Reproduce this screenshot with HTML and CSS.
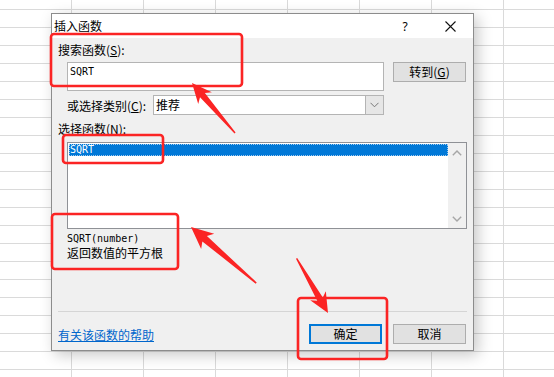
FILE: index.html
```html
<!DOCTYPE html>
<html lang="zh-CN">

<head>
    <meta charset="UTF-8">
    <meta name="viewport" content="width=device-width, initial-scale=1.0">
    <title>插入函数</title>
    <link rel="stylesheet" href="styles.css">
</head>

<body>
    <div class="sheet">
        <div class="dialog">
            <div class="titlebar">
                <span class="title">插入函数</span>
                <span class="help">?</span>
                <span class="close">
                    <svg width="11" height="11" viewBox="0 0 11 11">
                        <path d="M0.5 0.5 L10.5 10.5 M10.5 0.5 L0.5 10.5" stroke="#111" stroke-width="1.1" fill="none" />
                    </svg>
                </span>
            </div>
            <div class="content">
                <div class="label">搜索函数(<u>S</u>):</div>
                <div class="search-row">
                    <div class="search-box">SQRT</div>
                    <button class="btn">转到(<u>G</u>)</button>
                </div>
                <div class="category-row">
                    <span class="category-label">或选择类别(<u>C</u>):</span>
                    <div class="select">
                        <span class="select-value">推荐</span>
                        <span class="select-arrow">
                            <svg width="9" height="6" viewBox="0 0 9 6">
                                <path d="M0.5 0.8 L4.5 4.8 L8.5 0.8" stroke="#777" stroke-width="1" fill="none" />
                            </svg>
                        </span>
                    </div>
                </div>
                <div class="label list-label">选择函数(<u>N</u>):</div>
                <div class="listbox">
                    <div class="list-items">
                        <div class="item selected">SQRT</div>
                    </div>
                    <div class="scrollbar">
                        <svg width="10" height="6" viewBox="0 0 10 6">
                            <path d="M0.8 5.2 L5 1 L9.2 5.2" stroke="#a6a6a6" stroke-width="1.4" fill="none" />
                        </svg>
                        <svg width="10" height="6" viewBox="0 0 10 6">
                            <path d="M0.8 0.8 L5 5 L9.2 0.8" stroke="#a6a6a6" stroke-width="1.4" fill="none" />
                        </svg>
                    </div>
                </div>
                <div class="desc-sig">SQRT(number)</div>
                <div class="desc-text">返回数值的平方根</div>
                <div class="separator"></div>
                <div class="footer">
                    <a href="javascript:void(0);" class="help-link">有关该函数的帮助</a>
                    <div class="buttons">
                        <button class="btn primary">确定</button>
                        <button class="btn">取消</button>
                    </div>
                </div>
            </div>
        </div>

        <!-- red annotation marks drawn over the screenshot -->
        <svg class="marks" width="554" height="377" viewBox="0 0 554 377">
            <g fill="none" stroke="#fb2424" stroke-width="2.6">
                <rect x="51" y="34" width="191" height="52" rx="3" />
                <rect x="63" y="135" width="100" height="28" rx="3" />
                <rect x="52" y="214" width="126" height="55" rx="3" />
                <rect x="298" y="298" width="89" height="61" rx="3" />
            </g>
            <g fill="#fb2424">
                <polygon transform="translate(192 83) rotate(-130.7)" points="0,0 -20,-9 -16,-3.2 -66,-0.7 -66,0.7 -16,3.2 -20,9" />
                <polygon transform="translate(191 227) rotate(-139.3)" points="0,0 -22,-10 -18,-3.5 -86,-0.8 -86,0.8 -18,3.5 -22,10" />
                <polygon transform="translate(328 313) rotate(60.1)" points="0,0 -20,-9 -16,-3.2 -63,-0.7 -63,0.7 -16,3.2 -20,9" />
            </g>
        </svg>
    </div>
</body>

</html>
```

FILE: styles.css
```css
html,
body {
    margin: 0;
    height: 100%;
}

body {
    background-color: #fff;
    background-image:
        linear-gradient(to right, transparent 71px, #dadada 71px),
        linear-gradient(to bottom, transparent 17px, #dadada 17px);
    background-size: 72px 100%, 100% 18px;
    background-position: 0 0, 0 10px;
    font-family: "Noto Sans CJK SC", "Microsoft YaHei", sans-serif;
    font-size: 12px;
    color: #000;
}

.sheet {
    position: relative;
    width: 554px;
    height: 377px;
    overflow: hidden;
    padding-top: 13px;
    box-sizing: border-box;
}

.dialog {
    margin-left: 51px;
    width: 423px;
    height: 338px;
    box-sizing: border-box;
    border: 1px solid #8c8c8c;
    background-color: #f0f0f0;
    box-shadow: 4px 4px 14px rgba(0, 0, 0, 0.22);
}

.titlebar {
    display: flex;
    align-items: center;
    height: 24px;
    background-color: #fff;
    padding: 0 11px 0 2px;
}

.title {
    line-height: 16px;
}

.help {
    margin-left: auto;
    width: 24px;
    text-align: center;
    font-family: "Noto Sans", sans-serif;
    font-size: 12px;
}

.close {
    display: flex;
    justify-content: center;
    width: 24px;
    margin-left: 21px;
}

.content {
    padding: 0 6px 0 6px;
}

.label {
    margin-top: 4px;
    line-height: 16px;
    height: 16px;
}

.search-row {
    display: flex;
    align-items: flex-start;
    margin-top: 4px;
    padding-left: 9px;
}

.search-box {
    width: 317px;
    height: 29px;
    box-sizing: border-box;
    background-color: #fff;
    border: 1px solid #b4b4b4;
    padding: 2px 2px;
    font-family: "DejaVu Sans Mono", monospace;
    font-size: 10px;
    line-height: 14px;
}

.btn {
    width: 73px;
    height: 20px;
    box-sizing: border-box;
    padding: 0;
    background-color: #e1e1e1;
    border: 1px solid #adadad;
    font-family: "Noto Sans CJK SC", sans-serif;
    font-size: 12px;
    line-height: 16px;
    color: #000;
}

.search-row .btn {
    margin-left: 9px;
}

.btn.primary {
    border-color: #0078d7;
    box-shadow: inset 0 0 0 1px #0078d7;
}

.category-row {
    display: flex;
    align-items: center;
    margin-top: 4px;
    padding-left: 9px;
    height: 20px;
}

.category-label {
    width: 86px;
}

.select {
    display: flex;
    align-items: stretch;
    width: 231px;
    height: 20px;
    box-sizing: border-box;
    border: 1px solid #b4b4b4;
    background-color: #fff;
}

.select-value {
    flex: 1;
    padding-left: 2px;
    line-height: 18px;
}

.select-arrow {
    display: flex;
    align-items: center;
    justify-content: center;
    width: 17px;
    background-color: #e6e6e6;
    border-left: 1px solid #b4b4b4;
}

.list-label {
    margin-top: 6px;
}

.listbox {
    display: flex;
    margin-top: 5px;
    margin-left: 9px;
    width: 400px;
    height: 87px;
    box-sizing: border-box;
    border: 1px solid #8f9196;
    background-color: #fff;
}

.list-items {
    flex: 1;
    padding: 1px 0 0 1px;
}

.item {
    height: 12px;
    line-height: 12px;
    padding-left: 1px;
    font-family: "DejaVu Sans Mono", monospace;
    font-size: 10px;
}

.item.selected {
    background-color: #0078d7;
    color: #fff;
    outline: 1px dotted #9fc9ee;
    outline-offset: -1px;
}

.scrollbar {
    display: flex;
    flex-direction: column;
    justify-content: space-between;
    align-items: center;
    width: 18px;
    padding: 7px 0 6px;
    box-sizing: border-box;
    background-color: #f0f0f0;
}

.desc-sig {
    margin-top: 3px;
    padding-left: 9px;
    height: 14px;
    line-height: 14px;
    font-family: "DejaVu Sans Mono", monospace;
    font-size: 10px;
}

.desc-text {
    padding-left: 9px;
    height: 14px;
    line-height: 14px;
}

.separator {
    margin-top: 51px;
    height: 1px;
    width: 409px;
    background-color: #d5d5d5;
}

.footer {
    display: flex;
    align-items: center;
    justify-content: space-between;
    margin-top: 12px;
    height: 20px;
    width: 408px;
}

.help-link {
    color: #0066cc;
    text-decoration: underline;
}

.buttons {
    display: flex;
    gap: 11px;
}

.marks {
    position: absolute;
    top: 0;
    left: 0;
    pointer-events: none;
}
```
